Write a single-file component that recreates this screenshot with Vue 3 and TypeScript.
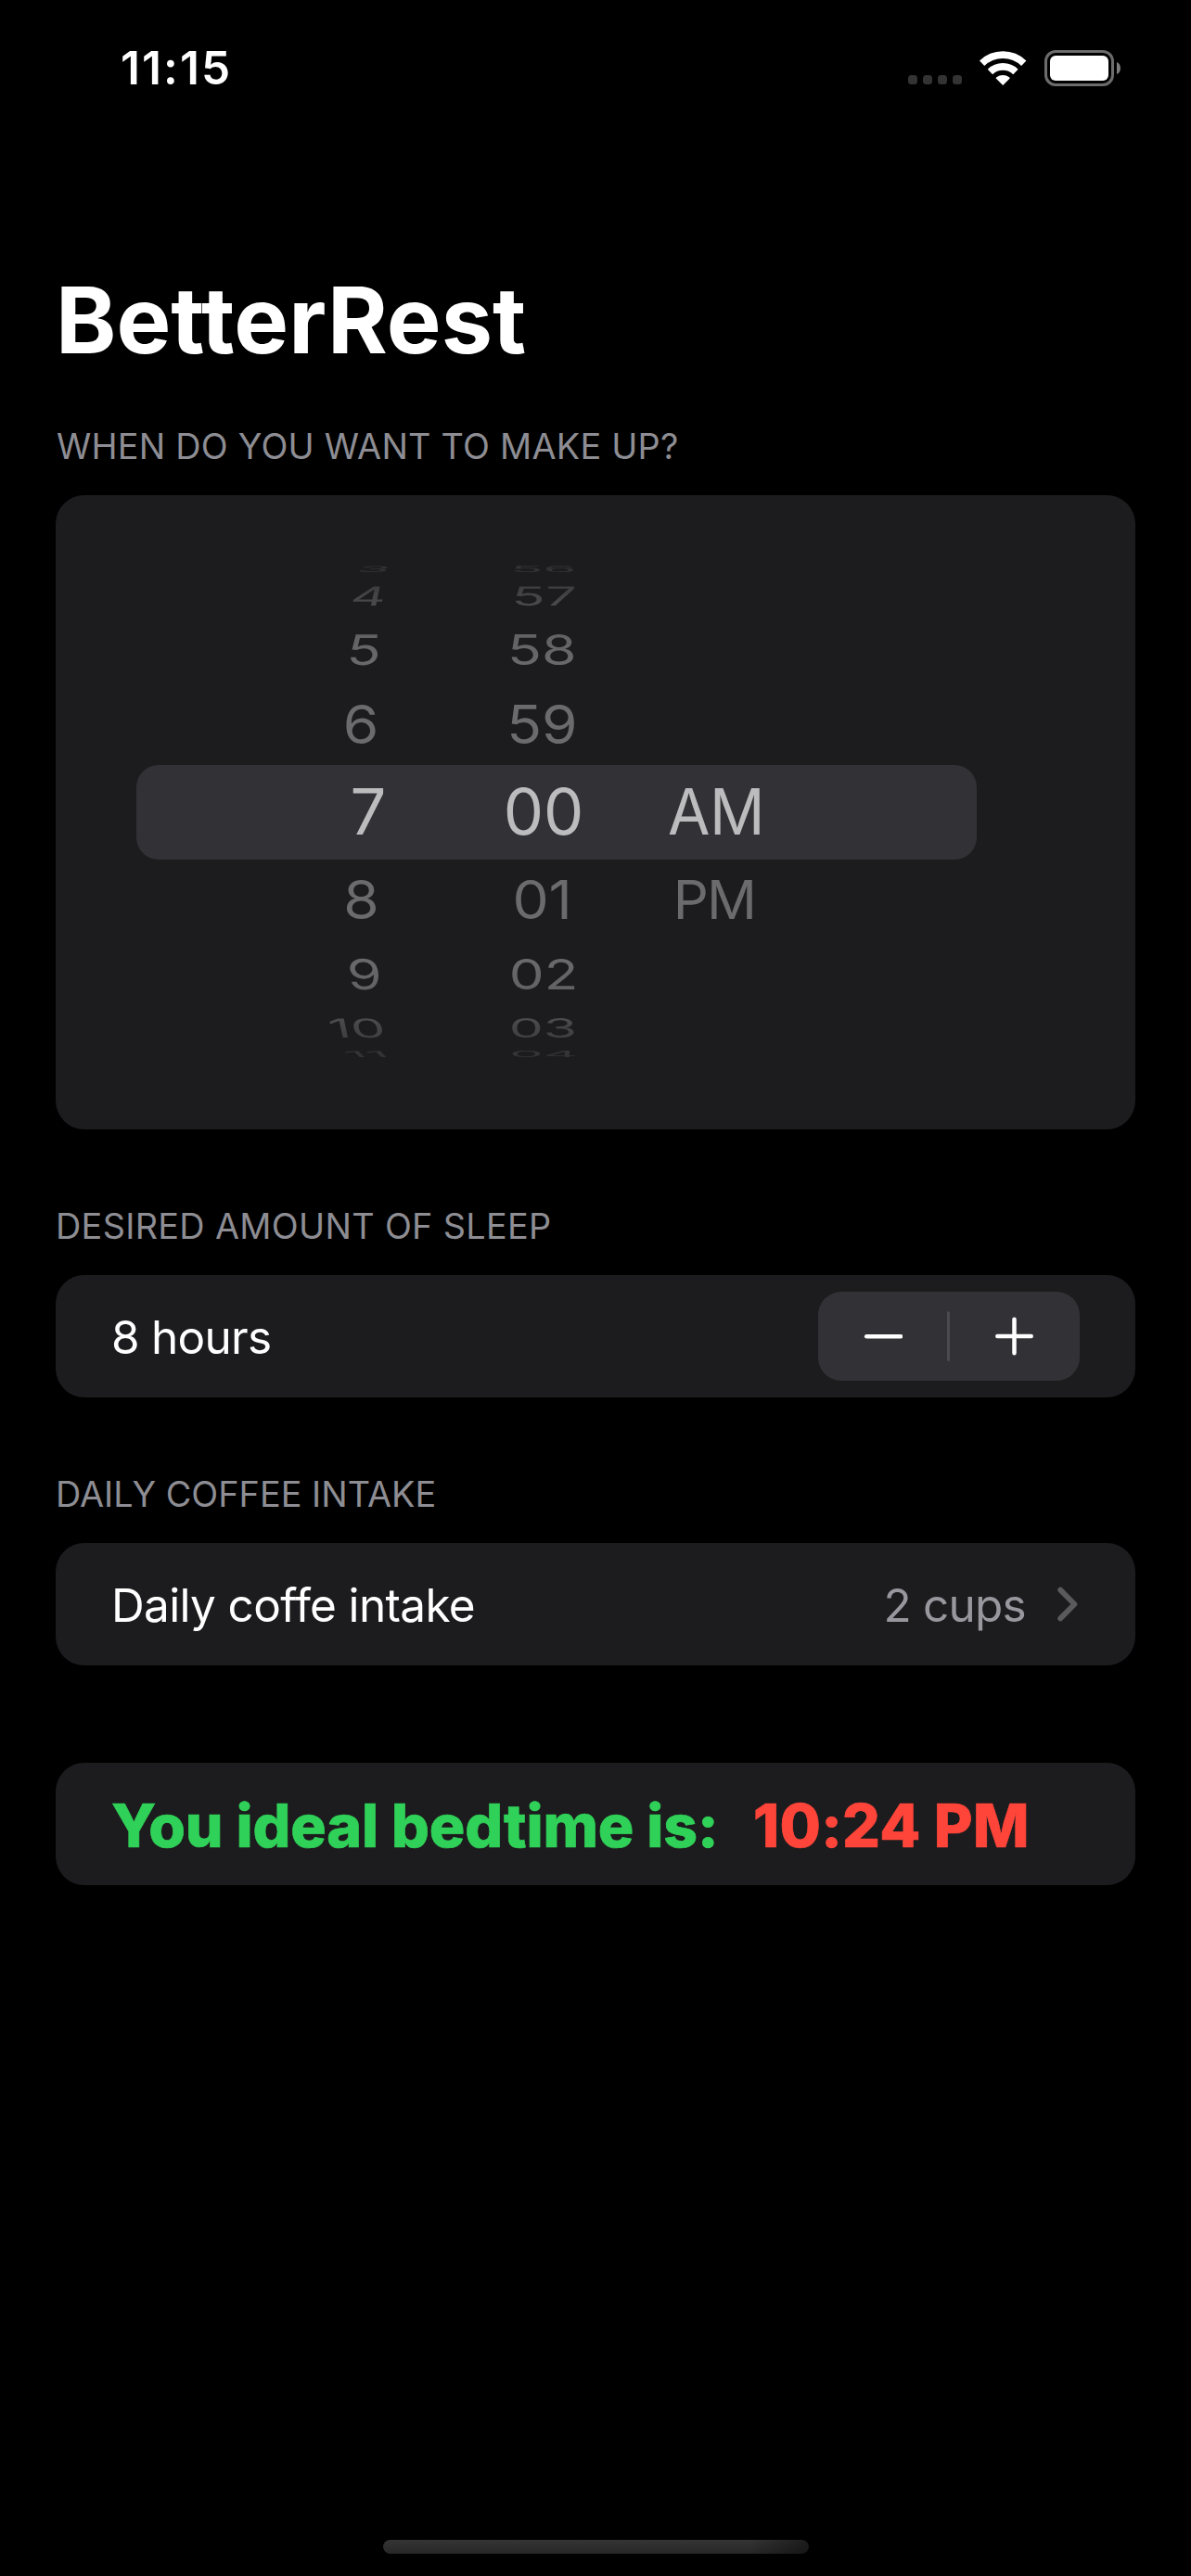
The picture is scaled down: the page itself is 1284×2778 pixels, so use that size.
<script setup lang="ts">
import { ref } from 'vue'

interface WheelRow {
  text: string
  x: number
  skew: number
}

interface WheelColumn {
  name: string
  first: number
  stretch: number
  rows: WheelRow[]
}

// Vertical offset and foreshortening of each slot, from four above the selection to four below.
const slots = [
  { y: -262, sx: 0.845, sy: 0.13 },
  { y: -233, sx: 0.86, sy: 0.41 },
  { y: -175.3, sx: 0.885, sy: 0.655 },
  { y: -94.5, sx: 0.905, sy: 0.83 },
  { y: -1, sx: 1, sy: 1 },
  { y: 94, sx: 0.905, sy: 0.83 },
  { y: 175, sx: 0.875, sy: 0.655 },
  { y: 232.5, sx: 0.855, sy: 0.41 },
  { y: 261, sx: 0.84, sy: 0.13 },
]

const columns: WheelColumn[] = [
  {
    name: 'hours',
    first: 0,
    stretch: 1,
    rows: [
      { text: '3', x: 6, skew: -45 },
      { text: '4', x: 0.3, skew: -12 },
      { text: '5', x: -4.2, skew: -5 },
      { text: '6', x: -8.2, skew: 0 },
      { text: '7', x: 0, skew: 0 },
      { text: '8', x: -7.8, skew: 0 },
      { text: '9', x: -4.3, skew: 5 },
      { text: '10', x: -12, skew: 12 },
      { text: '11', x: -2.2, skew: 45 },
    ],
  },
  {
    name: 'minutes',
    first: 0,
    stretch: 1,
    rows: [
      { text: '56', x: -0.3, skew: 0 },
      { text: '57', x: 0.2, skew: -3 },
      { text: '58', x: -1.8, skew: 0 },
      { text: '59', x: -1.8, skew: 0 },
      { text: '00', x: 0, skew: 0 },
      { text: '01', x: -1, skew: 0 },
      { text: '02', x: 0.5, skew: 0 },
      { text: '03', x: -0.5, skew: 0 },
      { text: '04', x: 0.3, skew: 0 },
    ],
  },
  {
    name: 'period',
    first: 4,
    stretch: 0.96,
    rows: [
      { text: 'AM', x: 1.8, skew: 0 },
      { text: 'PM', x: 0, skew: 0 },
    ],
  },
]

function place(column: WheelColumn, index: number) {
  const row = column.rows[index]
  const slot = slots[column.first + index]
  return {
    transform: `translate(${row.x}px, ${slot.y}px) skewX(${row.skew}deg) scale(${slot.sx * column.stretch}, ${slot.sy})`,
  }
}

const hours = ref(8)
const cups = ref(2)
</script>

<template>
  <div class="screen">
    <header class="status">
      <span class="clock">11:15</span>
      <div class="indicators">
        <div class="signal"><i v-for="n in 4" :key="n"></i></div>
        <svg class="wifi" viewBox="0 0 151 111" width="50.4" height="37">
          <path d="M7.8 39.9A97.5 97.5 0 0 1 143.2 39.9" fill="none" stroke="#fff" stroke-width="23" />
          <path d="M34.2 67.2A59.5 59.5 0 0 1 116.8 67.2" fill="none" stroke="#fff" stroke-width="23" />
          <path d="M75.5 111L53 88.5Q53 86.5 55 85A33 33 0 0 1 96 85Q98 86.5 98 88.5Z" fill="#fff" />
        </svg>
        <div class="battery"><div class="level"></div></div>
        <svg class="nub" viewBox="0 0 4 13" width="4" height="13">
          <path d="M0 0C5.3 2 5.3 11 0 13Z" fill="#7d7d7d" />
        </svg>
      </div>
    </header>

    <main class="form">
      <h1>BetterRest</h1>

      <h2 class="first-label">WHEN DO YOU WANT TO MAKE UP?</h2>
      <section class="card picker">
        <div class="selection"></div>
        <div class="wheels">
          <div v-for="col in columns" :key="col.name" class="wheel" :class="col.name">
            <span
              v-for="(row, i) in col.rows"
              :key="row.text"
              :class="{ selected: col.first + i === 4 }"
              :style="place(col, i)"
            >{{ row.text }}</span>
          </div>
        </div>
      </section>

      <h2 class="sleep-label">DESIRED AMOUNT OF SLEEP</h2>
      <section class="card row">
        <span class="value">{{ hours }} hours</span>
        <div class="stepper">
          <button type="button" aria-label="Decrease" @click="hours--">
            <svg viewBox="0 0 42 42" width="42" height="42">
              <path d="M3.2 21.3H40.2" stroke="#fff" stroke-width="4.5" stroke-linecap="round" />
            </svg>
          </button>
          <i class="divider"></i>
          <button type="button" aria-label="Increase" @click="hours++">
            <svg viewBox="0 0 42 42" width="42" height="42">
              <path d="M2.3 21H38.7M20.5 2.8V39.2" stroke="#fff" stroke-width="4.5" stroke-linecap="round" />
            </svg>
          </button>
        </div>
      </section>

      <h2 class="coffee-label">DAILY COFFEE INTAKE</h2>
      <section class="card row">
        <span class="name">Daily coffe intake</span>
        <div class="detail">
          <span>{{ cups }} cups</span>
          <svg viewBox="0 0 22 38" width="22" height="38">
            <path d="M3.2 3.6L18.4 19L3.2 34.4" fill="none" stroke="#5a5a5d" stroke-width="5.8" stroke-linecap="round" stroke-linejoin="round" />
          </svg>
        </div>
      </section>

      <section class="card row result">
        <span class="message">You ideal bedtime is:</span>
        <span class="bedtime">10:24 PM</span>
      </section>
    </main>

    <footer class="home"><div class="bar"></div></footer>
  </div>
</template>

<style>
body {
  margin: 0;
  background: #000;
}
</style>

<style scoped>
.screen {
  box-sizing: border-box;
  display: flex;
  flex-direction: column;
  width: 1284px;
  height: 2778px;
  overflow: hidden;
  background: #000;
  color: #fff;
  font-family: Inter, sans-serif;
}

.status {
  display: flex;
  justify-content: space-between;
  align-items: center;
  height: 146px;
  padding: 0 76px 0 130px;
}

.clock {
  font-size: 49.5px;
  font-weight: 600;
  letter-spacing: 2.1px;
}

.indicators {
  display: flex;
  align-items: center;
}

.signal {
  display: flex;
  gap: 6px;
  margin: 26px 19.3px 0 0;
}

.signal i {
  width: 10px;
  height: 10px;
  border-radius: 3.5px;
  background: #333;
}

.wifi {
  margin-right: 19.3px;
}

.battery {
  box-sizing: border-box;
  width: 75px;
  height: 39px;
  padding: 3px;
  border: 3px solid #6c6c6c;
  border-radius: 12px;
}

.level {
  height: 27px;
  border-radius: 6px;
  background: #fff;
}

.nub {
  margin-left: 3px;
}

.form {
  flex: 1;
  padding: 149px 60px 0;
}

h1 {
  margin: 0;
  font-size: 98.8px;
  font-weight: 700;
  line-height: 100px;
  letter-spacing: 0.05px;
}

h2 {
  margin: 0 0 29.5px;
  color: #8d8d93;
  font-size: 37.8px;
  font-weight: 400;
  line-height: 48px;
  white-space: nowrap;
}

.first-label {
  margin-top: 61.5px;
  padding-left: 1px;
  letter-spacing: 0.23px;
}

.sleep-label {
  margin-top: 79.5px;
  letter-spacing: 0.32px;
}

.coffee-label {
  margin-top: 79.5px;
  letter-spacing: 0.02px;
}

.card {
  box-sizing: border-box;
  width: 1164px;
  border-radius: 31px;
  background: #1c1c1e;
}

.picker {
  display: grid;
  align-items: center;
  height: 684px;
  padding: 0 171px 0 87px;
}

.selection,
.wheels {
  grid-area: 1 / 1;
}

.selection {
  height: 102px;
  border-radius: 24px;
  background: #323136;
}

.wheels {
  display: grid;
  grid-template-columns: 190px 188px 180px;
  height: 564px;
  padding-left: 155px;
  -webkit-mask-image: linear-gradient(rgba(0, 0, 0, 0.2), rgba(0, 0, 0, 0.3) 3.7%, rgba(0, 0, 0, 0.52) 8.9%, rgba(0, 0, 0, 0.88) 16%, #000 22.5%, #000 77.5%, rgba(0, 0, 0, 0.88) 84%, rgba(0, 0, 0, 0.52) 91.1%, rgba(0, 0, 0, 0.3) 96.3%, rgba(0, 0, 0, 0.2));
  mask-image: linear-gradient(rgba(0, 0, 0, 0.2), rgba(0, 0, 0, 0.3) 3.7%, rgba(0, 0, 0, 0.52) 8.9%, rgba(0, 0, 0, 0.88) 16%, #000 22.5%, #000 77.5%, rgba(0, 0, 0, 0.88) 84%, rgba(0, 0, 0, 0.52) 91.1%, rgba(0, 0, 0, 0.3) 96.3%, rgba(0, 0, 0, 0.2));
}

.wheel {
  display: grid;
  place-items: center;
}

.wheel span {
  grid-area: 1 / 1;
  color: #6b6b6d;
  font-size: 68.7px;
  line-height: 80px;
  white-space: nowrap;
}

.wheel .selected {
  color: #bcbcbe;
}

.period span {
  letter-spacing: -2px;
}

.period .selected {
  letter-spacing: -0.5px;
}

.row {
  display: flex;
  justify-content: space-between;
  align-items: center;
  height: 132px;
  padding: 0 60px;
  font-size: 49.5px;
  white-space: nowrap;
}

.row span {
  padding-top: 2px;
}

.value {
  letter-spacing: -0.75px;
}

.name {
  letter-spacing: -0.66px;
}

.stepper {
  display: flex;
  align-items: center;
  width: 282px;
  height: 96px;
  border-radius: 25px;
  background: #323136;
}

.stepper button {
  display: flex;
  align-items: center;
  justify-content: center;
  width: 140px;
  height: 96px;
  padding: 0;
  border: 0;
  background: none;
}

.stepper button:first-child {
  width: 139px;
}

.divider {
  width: 3px;
  height: 54px;
  border-radius: 1.5px;
  background: #4a4a4f;
}

.detail {
  display: flex;
  align-items: center;
  gap: 34px;
  padding-right: 2px;
  color: #98979e;
  letter-spacing: -0.75px;
}

.result {
  justify-content: flex-start;
  margin-top: 105px;
  font-size: 64.2px;
  font-weight: 800;
  -webkit-text-stroke: 0.7px currentColor;
}

.message {
  width: 692px;
  color: #30d158;
  letter-spacing: -0.12px;
}

.bedtime {
  color: #ff453a;
  letter-spacing: 0.22px;
}

.home {
  display: flex;
  justify-content: center;
  padding-bottom: 24px;
}

.bar {
  width: 459px;
  height: 15px;
  border-radius: 8px;
  background: linear-gradient(90deg, transparent 86%, rgba(0, 0, 0, 0.45)), linear-gradient(#343434, #272727);
}
</style>
